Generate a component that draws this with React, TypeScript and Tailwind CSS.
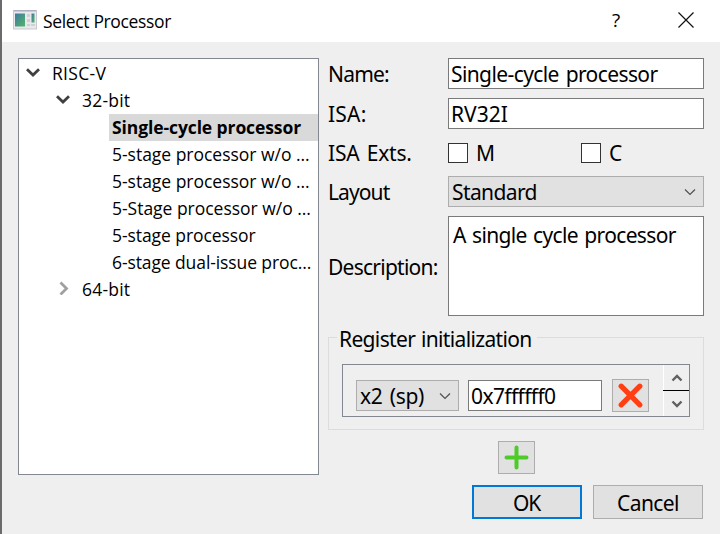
import type { ReactNode } from "react";

const ui = "font-['Open_Sans','Noto_Sans',sans-serif]";
const form = "font-['Noto_Sans','Open_Sans',sans-serif]";

function TitleBar() {
  return (
    <header className={`flex h-[42px] shrink-0 items-center bg-white pl-[11px] ${ui}`}>
      <svg width="24" height="20" viewBox="0 0 24 20" className="-mt-[3px] shrink-0">
        <defs>
          <linearGradient id="screen" x1="0" y1="0" x2="1" y2="1">
            <stop offset="0" stopColor="#3f78a5" />
            <stop offset="1" stopColor="#52b765" />
          </linearGradient>
        </defs>
        <rect x="0.5" y="0.5" width="23" height="18.5" fill="#e9e9ed" stroke="#c7c9ce" />
        <rect x="1" y="0" width="22" height="1.5" fill="#a9afc0" />
        <rect x="2" y="3.5" width="10" height="13" fill="url(#screen)" />
        <rect x="14" y="4" width="3" height="3" fill="#cfcfd4" />
        <rect x="14" y="9" width="3" height="3" fill="#cfcfd4" />
        <rect x="14" y="14" width="3" height="2" fill="#cfcfd4" />
        <rect x="18.5" y="3.5" width="3" height="9" fill="url(#screen)" />
        <rect x="18" y="14" width="4" height="2" fill="#cfcfd4" />
      </svg>
      <h1 className="ml-[6px] w-[562px] whitespace-nowrap text-[17.5px] leading-[27px] tracking-[-0.35px]">Select Processor</h1>
      <span className="-mt-[2px] w-[22px] text-center text-[19px]">?</span>
      <svg width="16" height="16" viewBox="0 0 16 16" className="-mt-[2px] ml-[51px] shrink-0" stroke="#111" strokeWidth="1.2">
        <path d="M0.5 0.5 15.5 15.5M15.5 0.5 0.5 15.5" />
      </svg>
    </header>
  );
}

const stages = [
  { name: "5-stage processor w/o ...", track: "tracking-[-0.02px]" },
  { name: "5-stage processor w/o ...", track: "tracking-[-0.02px]" },
  { name: "5-Stage processor w/o ...", track: "tracking-[-0.02px]" },
  { name: "5-stage processor", track: "tracking-[-0.07px]" },
  { name: "6-stage dual-issue proc...", track: "tracking-[-0.1px]" },
];

function TreeArrow({ open }: { open: boolean }) {
  return (
    <svg width="14" height="14" viewBox="0 0 14 14" fill="none" strokeWidth="2.8" className="-ml-px mr-px -mt-[3px] shrink-0" stroke={open ? "#404040" : "#a0a0a0"}>
      <path d={open ? "M1 4.300 7 10 13 4.300" : "M4.500 1.500 10.500 7.500 4.500 13.500"} />
    </svg>
  );
}

function Tree() {
  return (
    <section className={`h-[417px] w-[301px] shrink-0 overflow-hidden border border-[#828790] bg-white text-[17.5px] ${ui}`}>
      <ul className="whitespace-nowrap pt-px *:h-[27px] *:leading-[27px]">
        <li className="flex items-center pl-[8px]"><TreeArrow open /><span className="ml-[11px] tracking-[0.3px]">RISC-V</span></li>
        <li className="flex items-center pl-[38px]"><TreeArrow open /><span className="ml-[11px] tracking-[0.2px]">32-bit</span></li>
        <li className="ml-[90px] bg-[#d9d9d9] pl-[3px] font-bold tracking-[-0.1px]">Single-cycle processor</li>
        {stages.map((s, i) => (
          <li key={i} className={`pl-[93px] ${s.track}`}>{s.name}</li>
        ))}
        <li className="flex items-center pl-[38px]"><TreeArrow open={false} /><span className="ml-[11px] tracking-[0.2px]">64-bit</span></li>
      </ul>
    </section>
  );
}

function Row({ label, h, children, track = "" }: { label: string; h: string; children: ReactNode; track?: string }) {
  return (
    <div className={`flex items-center ${h}`}>
      <label className={`w-[120px] shrink-0 whitespace-nowrap ${track}`}>{label}</label>
      {children}
    </div>
  );
}

function Chevron({ up = false, bold = false }: { up?: boolean; bold?: boolean }) {
  return (
    <svg width="12" height="8" viewBox="0 0 12 8" fill="none" stroke={bold ? "#606060" : "#505050"} strokeWidth={bold ? 2.4 : 1.2} className="shrink-0">
      <path d={bold ? (up ? "M1.500 6.500 6 2 10.500 6.500" : "M1.500 1.500 6 6 10.500 1.500") : "M1 1.500 6 6.500 11 1.500"} />
    </svg>
  );
}

function Check({ label }: { label: string }) {
  return (
    <div className="flex w-[133px] shrink-0 items-center gap-[8px]">
      <span className="size-5 border border-[#333] bg-white" />
      <span>{label}</span>
    </div>
  );
}

const field = "flex w-[256px] h-[31px] items-center border border-[#7a7a7a] bg-white pl-[2px] whitespace-nowrap";
const button = "flex items-center justify-center border border-[#adadad] bg-[#e1e1e1]";

export default function App() {
  return (
    <main className="flex h-[534px] w-[720px] flex-col overflow-hidden border-l-2 border-[#6b6b6b] bg-[#efefef] text-black">
      <TitleBar />
      <div className="flex gap-[9px] pl-[16px] pt-[16px]">
        <Tree />
        <section className={`flex w-[376px] flex-col text-[21px] leading-[28px] ${form}`}>
          <Row label="Name:" h="h-[31px]" track="tracking-[-0.8px]"><div className={`${field} tracking-[-0.6px] [word-spacing:2px]`}>Single-cycle processor</div></Row>
          <Row label="ISA:" h="mt-[9px] h-[31px]" track="tracking-[0.2px]"><div className={`${field} tracking-[0px]`}>RV32I</div></Row>
          <Row label="ISA Exts." h="mt-[9px] h-[29px]" track="tracking-[-0.2px] [word-spacing:2px]"><Check label="M" /><Check label="C" /></Row>
          <Row label="Layout" h="mt-[9px] h-[31px]" track="tracking-[-0.9px]">
            <div className="flex h-[31px] w-[256px] items-center justify-between border border-[#adadad] bg-[#e1e1e1] pl-[3px] pr-[7px] tracking-[-0.6px]">
              Standard<Chevron />
            </div>
          </Row>
          <Row label="Description:" h="mt-[9px] h-[100px]" track="relative top-px tracking-[-0.75px]">
            <div className="h-[100px] w-[256px] whitespace-nowrap border border-[#7a7a7a] bg-white pl-[4px] pt-[4px] tracking-[-0.65px] [word-spacing:1.500px]">A single cycle processor</div>
          </Row>
          <div className="mt-[21px] h-[93px] border border-[#dcdcdc] pl-[13px]">
            <div className="-ml-[5px] -mt-[13px] flex h-[28px] w-[200px] items-center whitespace-nowrap bg-[#efefef] pl-[2px] tracking-[-0.65px] [word-spacing:1px]">Register initialization</div>
            <div className="mt-[11px] flex h-[53px] w-[348px] border border-[#828790] pl-[13px]">
              <div className={`${button} mt-[15px] h-[31px] w-[103px] shrink-0 justify-between! whitespace-nowrap pl-[3px] pr-[7px] tracking-[-0.3px] [word-spacing:2px]`}>x2 (sp)<Chevron /></div>
              <div className="ml-[9px] mt-[15px] flex h-[31px] w-[134px] shrink-0 items-center border border-[#7a7a7a] bg-white pl-[2px] tracking-[-0.6px]">0x7ffffff0</div>
              <div className={`${button} ml-[10px] mt-[14px] h-[33px] w-[37px] shrink-0`}>
                <svg width="25" height="25" viewBox="0 0 25 25" stroke="#ff3e14" strokeWidth="5.2" strokeLinecap="round" className="-mt-px -ml-px"><path d="M3.200 3.200 21.800 21.800M21.800 3.200 3.200 21.800" /></svg>
              </div>
              <div className="ml-[14px] flex w-[26px] shrink-0 flex-col">
                <span className="flex h-[25px] items-center justify-center border-l border-white"><Chevron up bold /></span>
                <span className="h-px bg-black" />
                <span className="flex h-[25px] items-center justify-center border-l border-white"><Chevron bold /></span>
              </div>
            </div>
          </div>
          <div className={`${button} ml-[170px] mt-[11px] h-[33px] w-[37px]`}>
            <svg width="25" height="25" viewBox="0 0 25 25" stroke="#4dcb29" strokeWidth="4" strokeLinecap="round" className="-mt-px -ml-px"><path d="M12.500 2.500V22.500M2.500 12.500H22.500" /></svg>
          </div>
          <div className="mt-[11px] flex gap-[11px] pl-[144px] tracking-[-0.6px]">
            <button className="flex h-[34px] w-[110px] items-center justify-center border-2 border-[#0078d7] bg-[#e1e1e1] pr-px pt-[2px] tracking-[-1.2px]">OK</button>
            <button className={`${button} h-[34px] w-[110px] pt-[2px]`}>Cancel</button>
          </div>
        </section>
      </div>
    </main>
  );
}
